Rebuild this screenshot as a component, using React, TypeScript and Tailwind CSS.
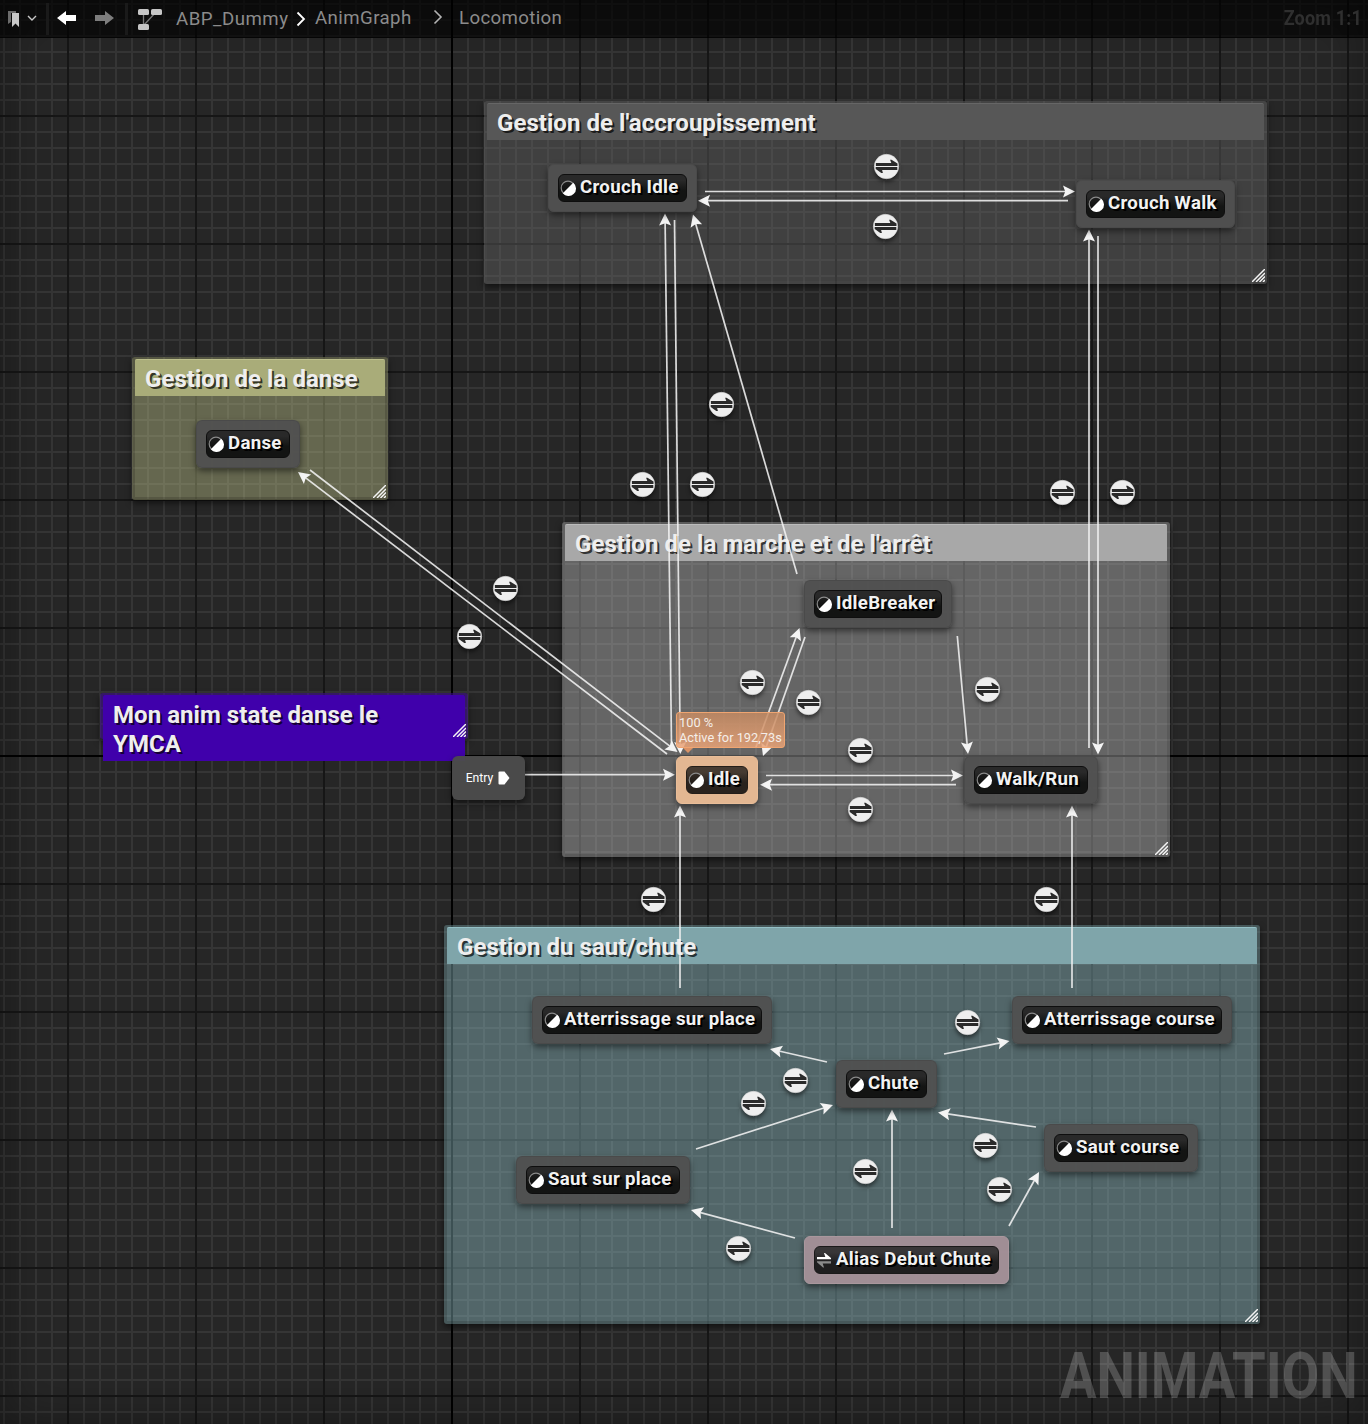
import React from "react";

type Comment = { x: number; y: number; w: number; h: number; title: string; box: string; head: string; headH: string };
type GraphNode = { x: number; y: number; w: number; label: string; kind?: "active" | "alias" };

const comments: Comment[] = [
  { x: 484, y: 101, w: 783, h: 183, title: "Gestion de l'accroupissement", box: "bg-[#6a6a6a]/40 border-[#6a6a6a]/10", head: "bg-[#575757] border-t-[#666666]", headH: "h-[37px]" },
  { x: 132, y: 357, w: 256, h: 143, title: "Gestion de la danse", box: "bg-[#c6cb8e]/40 border-black/15", head: "bg-[#a9ac79] border-t-[#bcbf8c]", headH: "h-[37px]" },
  { x: 562, y: 522, w: 608, h: 335, title: "Gestion de la marche et de l'arrêt", box: "bg-[#c6c6c6]/40 border-black/10", head: "bg-[#a8a8a8] border-t-[#bbbbbb]", headH: "h-[37px]" },
  { x: 444, y: 925, w: 816, h: 399, title: "Gestion du saut/chute", box: "bg-[#96c8cf]/40 border-black/15", head: "bg-[#7fa5aa] border-t-[#94c0c6]", headH: "h-[37px]" },
  { x: 100, y: 693, w: 368, h: 46, title: "Mon anim state danse le YMCA", box: "bg-[#4000ab]/40 border-[#4b1d8c]/20", head: "bg-[#4000ab] border-t-[#4000ab]", headH: "h-[66px]" },
];

const nodes: GraphNode[] = [
  { x: 548, y: 164, w: 149, label: "Crouch Idle" },
  { x: 1076, y: 180, w: 159, label: "Crouch Walk" },
  { x: 196, y: 420, w: 104, label: "Danse" },
  { x: 804, y: 580, w: 148, label: "IdleBreaker" },
  { x: 676, y: 756, w: 82, label: "Idle", kind: "active" },
  { x: 964, y: 756, w: 134, label: "Walk/Run" },
  { x: 532, y: 996, w: 240, label: "Atterrissage sur place" },
  { x: 1012, y: 996, w: 220, label: "Atterrissage course" },
  { x: 836, y: 1060, w: 101, label: "Chute" },
  { x: 1044, y: 1124, w: 154, label: "Saut course" },
  { x: 516, y: 1156, w: 174, label: "Saut sur place" },
  { x: 804, y: 1236, w: 205, label: "Alias Debut Chute", kind: "alias" },
];

const arrows: [number, number, number, number][] = [
  [705, 191.5, 1075, 191.5],
  [1068, 200.7, 698, 200.7],
  [671.5, 746, 665, 213.5],
  [674.5, 220, 680.3, 754],
  [797, 574, 693, 214.5],
  [1089, 748, 1089, 229.5],
  [1098, 236, 1098, 754.5],
  [310, 470, 677.5, 752],
  [667, 754, 298, 472],
  [756, 747, 799.5, 628],
  [805, 637, 763, 756],
  [957.3, 636, 968, 754],
  [766, 775.5, 963, 775.5],
  [956, 784.7, 760, 784.7],
  [525, 774.7, 675, 774.7],
  [680, 988, 680, 805.5],
  [1072, 988, 1072, 805.5],
  [827, 1062, 770, 1049],
  [944, 1054, 1009.5, 1041],
  [696, 1149, 833, 1105],
  [1036, 1127, 938, 1112.5],
  [892, 1228, 892, 1109.5],
  [795, 1238, 691, 1210],
  [1009, 1226, 1039, 1172],
];

const rules: [number, number][] = [
  [886, 166], [885, 226], [721, 404], [642, 484], [702, 484], [1062, 492], [1122, 492],
  [505, 588], [469, 636], [752, 682], [808, 702], [987, 689], [860, 750], [860, 809],
  [653, 899], [1046, 899], [967, 1022], [795, 1080], [753, 1103], [865, 1171], [985, 1145],
  [999, 1189], [738, 1248],
];

function Grid() {
  return (
    <svg className="absolute inset-0" width="1368" height="1424" shapeRendering="crispEdges">
      <defs>
        <pattern id="minor" x="3" y="3" width="16" height="16" patternUnits="userSpaceOnUse">
          <path d="M0 0H16V2H2V16H0Z" fill="#353535" />
        </pattern>
        <pattern id="major" x="67" y="115" width="128" height="128" patternUnits="userSpaceOnUse">
          <path d="M0 0H128V2H2V128H0Z" fill="#161616" />
        </pattern>
      </defs>
      <rect width="1368" height="1424" fill="#262626" />
      <rect width="1368" height="1424" fill="url(#minor)" />
      <rect width="1368" height="1424" fill="url(#major)" />
      <path d="M451 0h2v1424h-2zM0 755h1368v2H0z" fill="#000" />
    </svg>
  );
}

function CommentBox({ c }: { c: Comment }) {
  return (
    <div
      className={`absolute rounded-[3px] border-x-[3px] border-t-2 border-b-[3px] shadow-[0_3px_6px_rgba(0,0,0,0.55)] ${c.box}`}
      style={{ left: c.x, top: c.y, width: c.w, height: c.h }}
    >
      <div className={`${c.headH} ${c.head} rounded-t-[2px] border-t pl-2.5 pt-[5px] text-[24px] leading-[29px] font-bold tracking-[0.05px] text-[#eeeeee] [text-shadow:2px_2px_0_rgba(0,0,0,0.7)]`}>
        <div className="max-w-[300px] whitespace-nowrap data-[wrap=true]:whitespace-normal" data-wrap={c.h < 60}>
          {c.title}
        </div>
      </div>
      <svg className="absolute -right-px -bottom-px" width="13" height="13" viewBox="0 0 13 13">
        <path d="M0 13L13 0M4 13L13 4M7.5 13L13 7.5M11 13L13 11" stroke="#f4f4f4" strokeWidth="1.5" fill="none" />
      </svg>
    </div>
  );
}

function Arrow({ p }: { p: [number, number, number, number] }) {
  const [x1, y1, x2, y2] = p;
  const angle = (Math.atan2(y2 - y1, x2 - x1) * 180) / Math.PI;
  const len = Math.hypot(x2 - x1, y2 - y1);
  return (
    <g transform={`translate(${x2} ${y2}) rotate(${angle})`}>
      <path d={`M${-len} 0H-8`} stroke="#f2f2f2" strokeOpacity=".88" strokeWidth="1.7" />
      <path d="M0 0L-12 -6L-9.8 0L-12 6Z" fill="#f4f4f4" />
    </g>
  );
}

function RuleIcon({ x, y }: { x: number; y: number }) {
  return (
    <svg
      className="absolute overflow-visible drop-shadow-[0_3px_2px_rgba(0,0,0,0.5)]"
      style={{ left: x - 12, top: y - 12 }}
      width="25"
      height="25"
      viewBox="-12.5 -12.5 25 25"
    >
      <circle r="12.2" fill="#eeeeee" stroke="#d4d4d4" strokeWidth=".6" />
      <path d="M-10.6 -3.5H4.8L3.6 -6.8H5L11 -3V-0.6H-10.6Z" fill="#2a2a2a" />
      <path d="M10.8 3.4H-4.4L-3.6 6.5H-5.2L-10.8 2.6V0.5H10.8Z" fill="#2a2a2a" />
    </svg>
  );
}

function NodeBox({ n }: { n: GraphNode }) {
  const outer =
    n.kind === "active" ? "bg-[#e3b792] border-[#e9bd98]" : n.kind === "alias" ? "bg-[#a39097]/97 border-[#a9979d]" : "bg-[#505050]/95 border-[#4a4a4a]/90";
  const inner =
    n.kind === "active" ? "from-[#463b32] to-[#2a231e] border-[#241e19]" : n.kind === "alias" ? "from-[#383637] to-[#1f1e1f] border-[#1a1919]" : "from-[#292929] to-[#131413] border-[#0e0e0e]";
  return (
    <div
      className={`absolute flex h-12 rounded-md border p-[9px] shadow-[0_3px_6px_rgba(0,0,0,0.5)] ${outer}`}
      style={{ left: n.x, top: n.y, width: n.w }}
    >
      <div className={`flex h-7 flex-1 items-center rounded-[6px] border bg-linear-to-b from-20% to-60% pl-px ${inner}`}>
        {n.kind === "alias" ? (
          <svg width="16" height="16" viewBox="0 0 16 16" className="mr-1 shrink-0">
            <path d="M1 5H9.300L8 1H9L15 6V7.200H1Z" fill="#fff" />
            <path d="M15 9.200H1V10.300L7 15.500H8L6.700 11.400H15Z" fill="#8b8b8b" />
          </svg>
        ) : (
          <svg width="16" height="16" viewBox="0 0 16 16" className="mr-1 shrink-0">
            <circle cx="8" cy="8" r="6.800" fill="#000" fillOpacity=".2" stroke="#8a8a8a" strokeWidth="1.2" />
            <path d="M13.200 2.800A7.400 7.400 0 1 1 2.800 13.200Z" fill="#fff" />
          </svg>
        )}
        <span className="-mt-[3px] whitespace-nowrap text-[18.67px] leading-6 font-bold tracking-[0.29px] text-[#f2f2f2] [text-shadow:1px_1px_0_#000,2px_2px_0_#000]">
          {n.label}
        </span>
      </div>
    </div>
  );
}

function Toolbar() {
  return (
    <header className="relative flex h-[38px] items-center border-b border-black/60 bg-black/65 text-[18.67px] text-[#8b8b8b]">
      <svg width="32" height="20" viewBox="0 0 32 20" className="ml-2 shrink-0">
        <path d="M0 2H8V4H3V13L0 15Z" fill="#6c6c6c" />
        <path d="M4 4H11V18L7.500 14.500L4 18Z" fill="#c8c8c8" />
        <path d="M20 7L24 11L28 7" fill="none" stroke="#c8c8c8" strokeWidth="1.4" />
      </svg>
      <span className="ml-1.5 h-8 w-[3px] bg-[#1a1a1a]" />
      <svg width="20" height="16" viewBox="0 0 20 16" className="-mt-0.5 ml-2 shrink-0">
        <path d="M0 8L9 1V5H19V11H9V15Z" fill="#fff" />
      </svg>
      <svg width="20" height="16" viewBox="0 0 20 16" className="-mt-0.5 ml-[18px] shrink-0">
        <path d="M19 8L10 1V5H0V11H10V15Z" fill="#7d7d7d" />
      </svg>
      <span className="ml-2.5 h-8 w-[3px] bg-[#1a1a1a]" />
      <svg width="26" height="24" viewBox="0 0 26 24" className="ml-[9px] shrink-0">
        <path d="M6.500 5V18M19 5L7 18" stroke="#777" strokeWidth="1.3" />
        <rect x="1" y="2" width="11" height="6" rx="1.500" fill="#c6c6c6" />
        <rect x="14" y="2" width="11" height="6" rx="1.500" fill="#c6c6c6" />
        <rect x="1" y="17" width="11" height="6" rx="1.500" fill="#c6c6c6" />
      </svg>
      <span className="ml-[13px] w-[112px] whitespace-nowrap pt-px tracking-[0.5px]">ABP_Dummy</span>
      <svg width="10" height="16" viewBox="0 0 10 16" className="ml-2 shrink-0">
        <path d="M1.500 1.500L8 8L1.500 14.500" fill="none" stroke="#fff" strokeWidth="1.8" />
      </svg>
      <span className="-mt-px ml-[9px] w-[97px] whitespace-nowrap tracking-[0.42px]">AnimGraph</span>
      <svg width="10" height="16" viewBox="0 0 10 16" className="-mt-[3px] ml-[21px] shrink-0">
        <path d="M1.500 1.500L8 8L1.500 14.500" fill="none" stroke="#b4b4b4" strokeWidth="1.6" />
      </svg>
      <span className="-mt-px ml-4 whitespace-nowrap tracking-[0.35px]">Locomotion</span>
      <span className="mr-[6px] ml-auto origin-right scale-x-90 -mt-0.5 whitespace-nowrap text-[20px] font-bold tracking-[0.2px] text-[#2f2f2f]">Zoom 1:1</span>
    </header>
  );
}

export default function App() {
  return (
    <main className="relative h-[1424px] w-[1368px] overflow-hidden bg-[#262626] font-[Roboto,sans-serif]">
      <Grid />
      <div className="pointer-events-none absolute inset-0 shadow-[inset_0_0_50px_rgba(0,0,0,0.4)]" />
      <Toolbar />
      {comments.map((c) => (
        <CommentBox key={c.title} c={c} />
      ))}
      <svg className="absolute inset-0" width="1368" height="1424">
        {arrows.map((p, i) => (
          <Arrow key={i} p={p} />
        ))}
      </svg>
      {rules.map(([x, y]) => (
        <RuleIcon key={`${x}-${y}`} x={x} y={y} />
      ))}
      <div className="absolute top-[756px] left-[452px] flex h-11 w-[73px] items-center justify-center gap-[5px] rounded-md bg-[#4c4c4c]/95 pr-px text-[12.2px] text-white shadow-[0_3px_6px_rgba(0,0,0,0.5)]">
        Entry
        <svg width="12" height="14" viewBox="0 0 12 14">
          <path d="M1.500 0.500H6.500L11.500 7L6.500 13.500H1.500Q0.500 13.500 0.500 12.500V1.500Q0.500 0.500 1.500 0.500Z" fill="#fff" />
        </svg>
      </div>
      {nodes.map((n) => (
        <NodeBox key={n.label} n={n} />
      ))}
      <div className="absolute top-[712px] left-[676px] h-9 w-[109px] rounded-[3px] border border-[#f0a571] bg-linear-to-b from-[#c48a62]/85 to-[#eba478]/85 pt-[2px] pl-[2px] text-[12.8px] leading-[15px] whitespace-nowrap text-[#f4eee9]">
        <div>100 %</div>
        <div>Active for 192,73s</div>
        <svg className="absolute top-[35px] left-[6px]" width="10" height="5" viewBox="0 0 10 5">
          <path d="M0 0H10L5 5Z" fill="#d99266" />
        </svg>
      </div>
      <div className="absolute right-[11px] bottom-[8px] origin-right scale-x-[.83] text-[65.5px] leading-[80px] font-bold text-white/20">ANIMATION</div>
    </main>
  );
}
